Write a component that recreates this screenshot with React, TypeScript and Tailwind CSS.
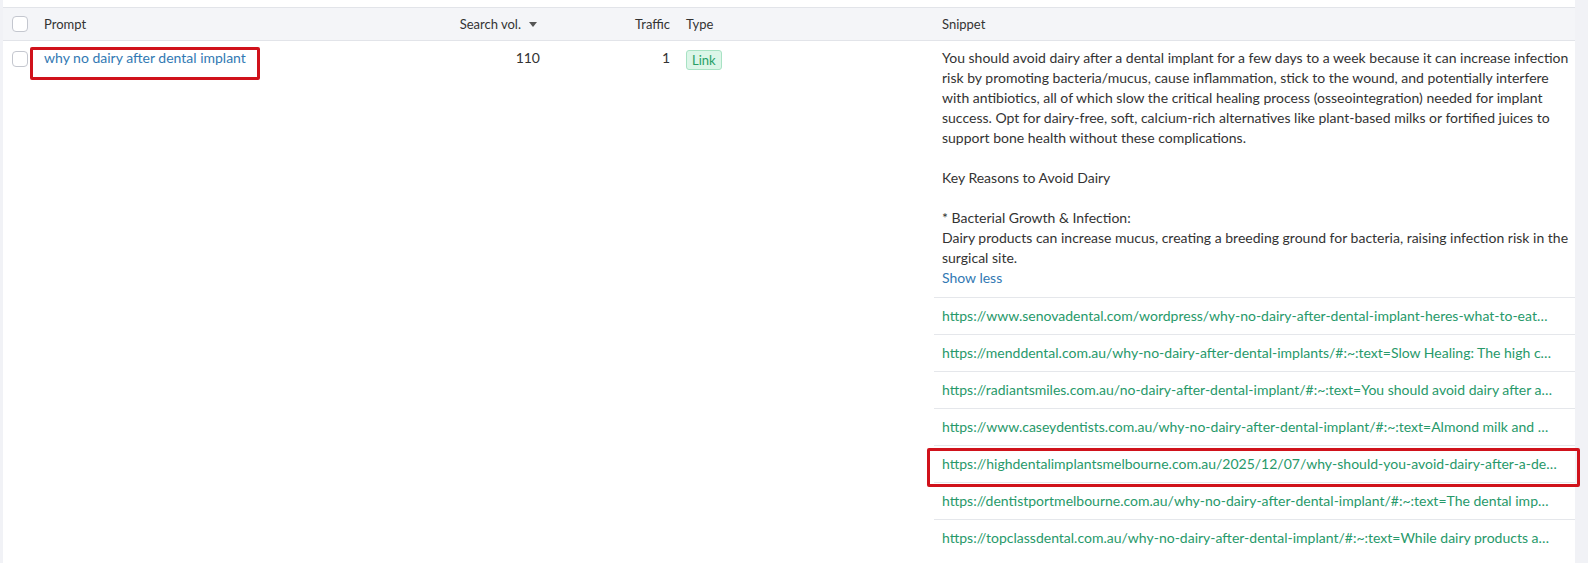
import { useState } from "react";

const snippet = `You should avoid dairy after a dental implant for a few days to a week because it can increase infection
risk by promoting bacteria/mucus, cause inflammation, stick to the wound, and potentially interfere
with antibiotics, all of which slow the critical healing process (osseointegration) needed for implant
success. Opt for dairy-free, soft, calcium-rich alternatives like plant-based milks or fortified juices to
support bone health without these complications.

Key Reasons to Avoid Dairy

* Bacterial Growth & Infection:
Dairy products can increase mucus, creating a breeding ground for bacteria, raising infection risk in the
surgical site.`;

const sources = [
  { url: "https://www.senovadental.com/wordpress/why-no-dairy-after-dental-implant-heres-what-to-eat…" },
  { url: "https://menddental.com.au/why-no-dairy-after-dental-implants/#:~:text=Slow Healing: The high c…" },
  { url: "https://radiantsmiles.com.au/no-dairy-after-dental-implant/#:~:text=You should avoid dairy after a…" },
  { url: "https://www.caseydentists.com.au/why-no-dairy-after-dental-implant/#:~:text=Almond milk and …" },
  { url: "https://highdentalimplantsmelbourne.com.au/2025/12/07/why-should-you-avoid-dairy-after-a-de…", marked: true },
  { url: "https://dentistportmelbourne.com.au/why-no-dairy-after-dental-implant/#:~:text=The dental imp…" },
  { url: "https://topclassdental.com.au/why-no-dairy-after-dental-implant/#:~:text=While dairy products a…" },
];

const Checkbox = ({ className = "" }: { className?: string }) => (
  <span className={`block w-4 h-4 rounded-[4px] border border-[#c4c7cf] bg-white ${className}`} />
);

const cols = "grid grid-cols-[33px_384px_128px_130px_256px_641px]";

export default function App() {
  const [expanded, setExpanded] = useState(true);

  return (
    <div className="h-[563px] overflow-hidden flex bg-[#f1f2f6] font-[Lato,sans-serif] text-[14px] leading-5 text-[#333]">
      <div className="ml-[3px] w-[1572px] bg-white pt-[7px]">
        {/* header */}
        <div className={`${cols} h-[34px] bg-[#f4f5f8] border-y border-[#e2e4e9] text-[13px] text-[#333] items-center`}>
          <div className="pl-[9px]">
            <Checkbox />
          </div>
          <div className="pl-2">Prompt</div>
          <div className="pr-[11px] flex items-center justify-end gap-2">
            <span>Search vol.</span>
            <svg width="8" height="5" viewBox="0 0 8 5" className="mt-[1px]">
              <path d="M0 0h8L4 5z" fill="#555" />
            </svg>
          </div>
          <div className="pr-2 text-right">Traffic</div>
          <div className="pl-2">Type</div>
          <div className="pl-2">Snippet</div>
        </div>

        {/* row */}
        <div className={`${cols} pt-[7px] items-start`}>
          <div className="pl-[9px]">
            <Checkbox className="mt-[3px]" />
          </div>
          <div className="pl-2">
            <div className="relative inline-block">
              <a href="#" className="text-[#3279b3]">
                why no dairy after dental implant
              </a>
              <span className="absolute left-[-14px] right-[-14px] top-[-1px] bottom-[-12px] border-[3px] border-[#d0121b] rounded-[2px] pointer-events-none" />
            </div>
          </div>
          <div className="pr-2 text-right">110</div>
          <div className="pr-2 text-right">1</div>
          <div className="pl-2">
            <span className="inline-block mt-[2px] px-[5px] leading-[18px] text-[13px] text-[#28a066] bg-[#dcf6e8] border border-[#a8e2c4] rounded-[3px]">
              Link
            </span>
          </div>
          <div className="px-2">
            {expanded && <p className="whitespace-pre">{snippet}</p>}
            <button
              onClick={() => setExpanded(!expanded)}
              className="block text-[#3279b3] leading-5"
            >
              {expanded ? "Show less" : "Show more"}
            </button>
            <ul className="-mx-2 mt-[9px]">
              {sources.map((s) => (
                <li key={s.url} className="relative border-t border-[#e5e7eb] px-2 py-2 text-[#27996a]">
                  <span className="block truncate">{s.url}</span>
                  {s.marked && (
                    <span className="absolute left-[-7px] right-[-5px] top-[2px] bottom-[-5px] border-[3px] border-[#d0121b] rounded-[2px] pointer-events-none" />
                  )}
                </li>
              ))}
            </ul>
          </div>
        </div>
      </div>
    </div>
  );
}
